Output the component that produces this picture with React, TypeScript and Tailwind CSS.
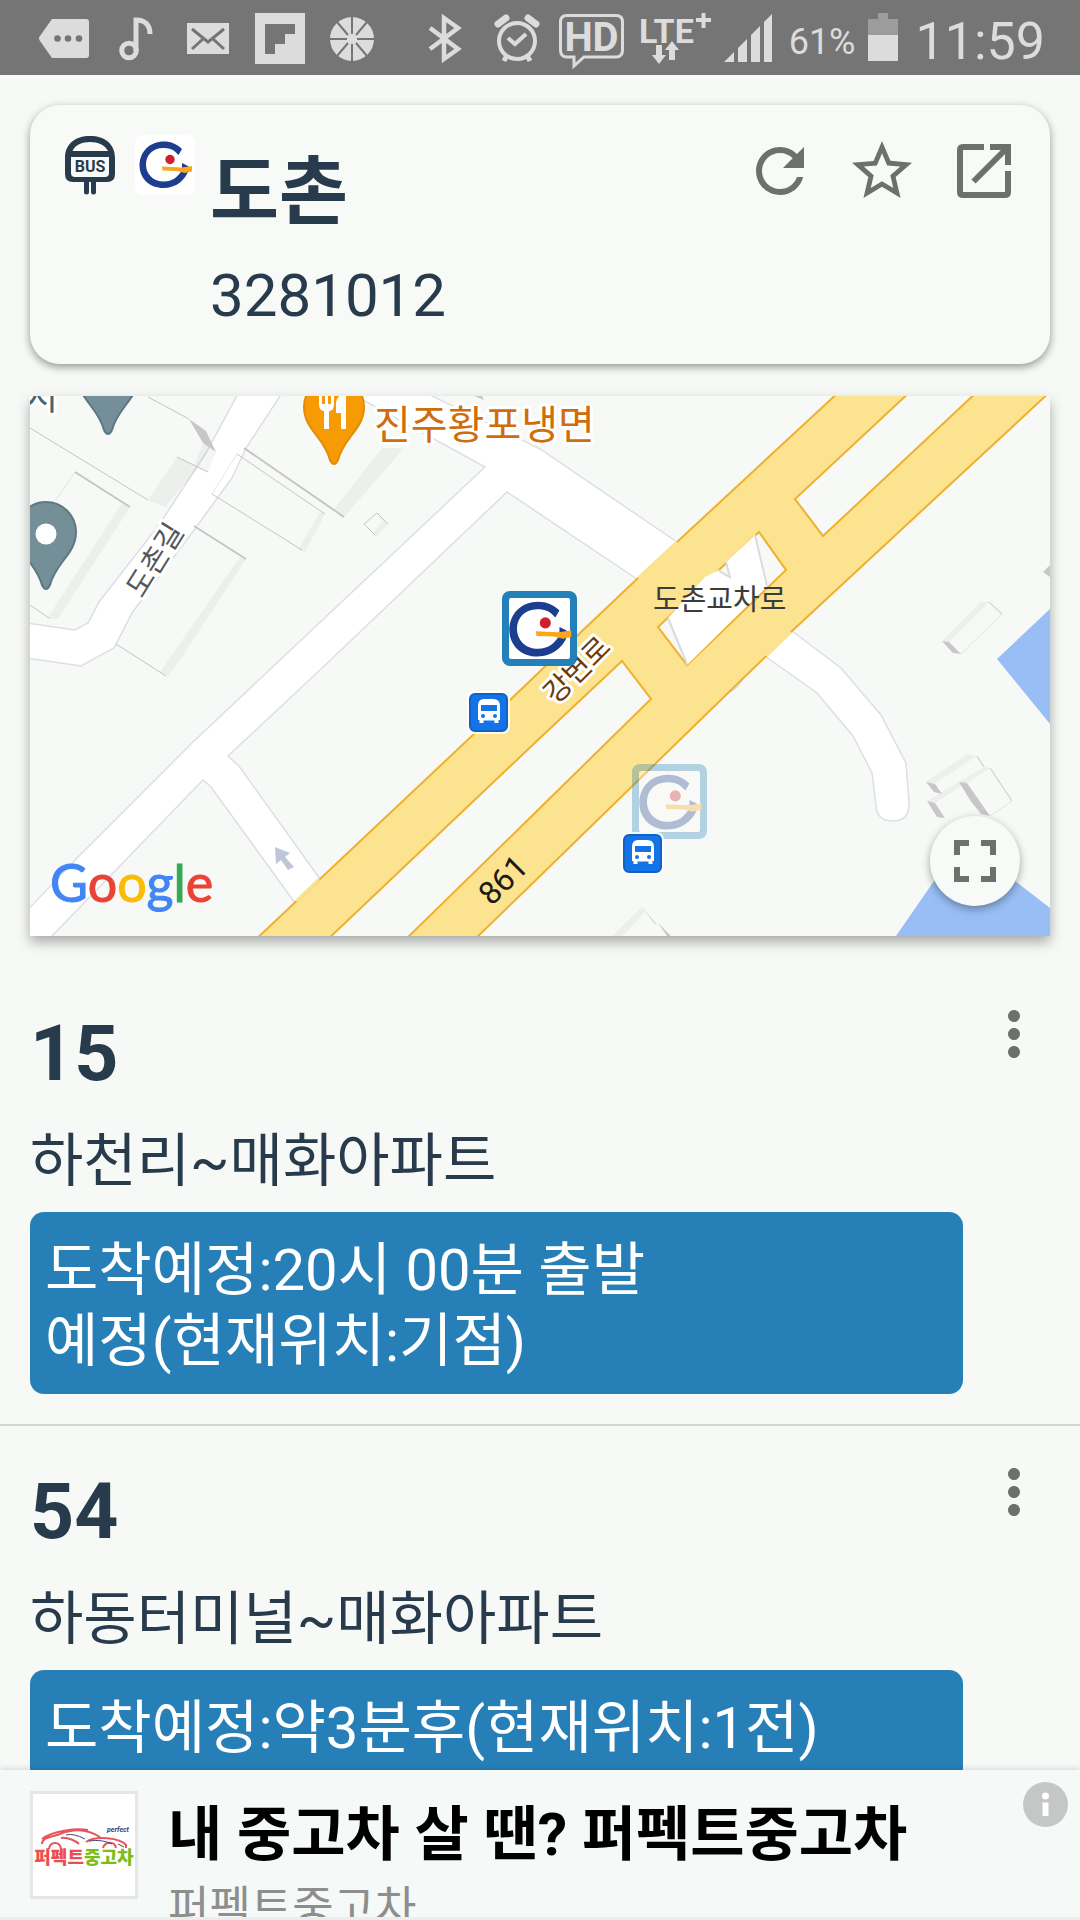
import type { ReactNode } from 'react'
import { MdFullscreen, MdMoreVert, MdRefresh, MdStarBorder } from 'react-icons/md'

type Route = {
  number: string
  name: string
  arrival: string
}

const routes: Route[] = [
  { number: '15', name: '하천리~매화아파트', arrival: '도착예정:20시 00분 출발\n예정(현재위치:기점)' },
  { number: '54', name: '하동터미널~매화아파트', arrival: '도착예정:약3분후(현재위치:1전)' },
]

function StatusIcon({ width, children }: { width: number; children: ReactNode }) {
  return (
    <svg width={width} height={75} viewBox={`0 0 ${width} 75`} className="shrink-0 fill-[#dcdcdc]" aria-hidden="true">
      {children}
    </svg>
  )
}

function StatusBar() {
  return (
    <div className="flex h-[75px] shrink-0 items-center justify-between bg-[#757575] pr-[35px] pl-[39px] text-[#dcdcdc]">
      <div className="flex gap-[22px]">
        <StatusIcon width={50}>
          <path d="M13 19H47Q50 19 50 22V55Q50 58 47 58H13L1 41Q-1 38 1 36Z" />
          <g fill="#757575">
            <circle cx="18.500" cy="38.500" r="3.300" />
            <circle cx="29" cy="38.500" r="3.300" />
            <circle cx="40" cy="38.500" r="3.300" />
          </g>
        </StatusIcon>
        <StatusIcon width={50}>
          <circle cx="18" cy="50.500" r="7.300" fill="none" stroke="#dcdcdc" strokeWidth="5" />
          <path d="M25 51V20C34 20 39 25 39 34" fill="none" stroke="#dcdcdc" strokeWidth="5" />
        </StatusIcon>
        <StatusIcon width={50}>
          <path d="M4 23H46V54H4Z" />
          <path d="M9 29L25 42L41 29M9 49L20 39M41 49L30 39" fill="none" stroke="#757575" strokeWidth="3" />
        </StatusIcon>
        <StatusIcon width={50}>
          <path d="M0 13H50V64H0Z" />
          <path d="M10 24H40V34H30V44H20V54H10Z" fill="#757575" />
        </StatusIcon>
        <StatusIcon width={50}>
          <circle cx="25" cy="39" r="22" />
          <g stroke="#757575" strokeWidth="2">
            <path d="M25 17V34M25 44V61M3 39H20M30 39H47M10 22L21 35M40 22L29 35M10 56L21 43M40 56L29 43" />
          </g>
        </StatusIcon>
      </div>
      <div className="flex items-center gap-3">
        <StatusIcon width={60}>
          <path d="M15 28L43 49L29 59V18L43 28L15 49" fill="none" stroke="#dcdcdc" strokeWidth="4.500" />
        </StatusIcon>
        <StatusIcon width={60}>
          <circle cx="30" cy="41" r="18" fill="none" stroke="#dcdcdc" strokeWidth="4" />
          <path d="M21 38L28 44L39 34" fill="none" stroke="#dcdcdc" strokeWidth="4" />
          <path d="M11 24L19 18M49 24L41 18" fill="none" stroke="#dcdcdc" strokeWidth="7" strokeLinecap="round" />
          <path d="M20 55L17 61M40 55L43 61" fill="none" stroke="#dcdcdc" strokeWidth="5" />
        </StatusIcon>
        <StatusIcon width={66}>
          <path
            d="M8 15.500H57Q63.500 15.500 63.500 22V50Q63.500 57 57 57H25L15 66V57H8Q1.500 57 1.500 50V22Q1.500 15.500 8 15.500Z"
            fill="none"
            stroke="#dcdcdc"
            strokeWidth="3"
          />
          <text x="32.500" y="51" textAnchor="middle" className="text-[40px] font-bold">
            HD
          </text>
        </StatusIcon>
        <StatusIcon width={75}>
          <text x="2" y="43" className="text-[34px] font-bold">
            LTE
          </text>
          <path d="M59 20H74M66.500 13V28" stroke="#dcdcdc" strokeWidth="4" />
          <path d="M19 45H25V55H29L22 64L15 55H19ZM32 60H38V50H42L35 41L28 50H32Z" />
        </StatusIcon>
        <StatusIcon width={48}>
          <path d="M0 62L10 52V62ZM14 48L23 39V62H14ZM27 35L36 26V62H27ZM40 22L48 14V62H40Z" />
        </StatusIcon>
        <span className="w-[72px] pt-2 text-right text-4xl">61%</span>
        <StatusIcon width={36}>
          <path d="M0 19H10V13H20V19H30V61H0Z" fill="#9c9c9c" />
          <path d="M0 35H30V61H0Z" />
        </StatusIcon>
        <time className="pt-2 text-[52px] leading-none">11:59</time>
      </div>
    </div>
  )
}

function BusStopIcon() {
  return (
    <svg viewBox="0 0 60 60" className="size-[60px] shrink-0" fill="#283b4c" aria-hidden="true">
      <path
        fillRule="evenodd"
        d="M30 1C45 1 55 9 55 23V39Q55 47 47 47H13Q5 47 5 39V23C5 9 15 1 30 1ZM12.500 16H48C45 10 38 7 30 7S15 10 12.500 16ZM11 22V38Q11 42 15 42H45Q49 42 49 38V22Z"
      />
      <path d="M26.500 46V57M33.500 46V57" stroke="#283b4c" strokeWidth="5" strokeLinecap="round" />
      <text x="30" y="37" textAnchor="middle" className="text-[16px] font-bold">
        BUS
      </text>
    </svg>
  )
}

function CityMark() {
  return (
    <>
      <path
        d="M43.500 20L47 14C42 9 36 6.500 29 6.500C15 6.500 5 16 4.500 30C4.500 44 15 53 28.500 53C41 53 51 45 54 34L53 31L47 28V35C43 42 37 46.500 29 46.500C18 46.500 11 39 11 29.500C11 20 18 13 28 13C34 13 38 14.500 40.500 17Z"
        fill="#1d3d8f"
      />
      <circle cx="35" cy="24.500" r="4.700" fill="#d11f2d" />
      <path d="M27 31.500L46 32.500L57 31V36.500L50 38L42 36L27.500 35.500Z" fill="#faa61a" />
    </>
  )
}

function OpenIcon() {
  return (
    <svg viewBox="0 0 24 24" className="size-[72px]" fill="none" stroke="currentColor" strokeWidth="2" aria-hidden="true">
      <path d="M12 4H5Q4 4 4 5V19Q4 20 5 20H19Q20 20 20 19V12M14 4H20V10M20 4L8.500 15.500" />
    </svg>
  )
}

function StopCard() {
  return (
    <section className="flex gap-[15px] rounded-[30px] bg-[#f8faf7] px-[30px] pt-[30px] pb-[22px] shadow-[0_3px_9px_rgba(0,0,0,0.4)]">
      <BusStopIcon />
      <svg viewBox="0 0 60 60" className="size-[60px] shrink-0 rounded-lg bg-white" aria-hidden="true">
        <CityMark />
      </svg>
      <div className="min-w-0 flex-1">
        <h1 className="text-[75px] leading-[114px] font-bold">도촌</h1>
        <p className="text-[60px] leading-[93px]">3281012</p>
      </div>
      <div className="flex h-[72px] gap-[30px] text-[#6e706d]">
        <button type="button" aria-label="새로고침">
          <MdRefresh className="size-[72px]" />
        </button>
        <button type="button" aria-label="즐겨찾기">
          <MdStarBorder className="size-[72px]" />
        </button>
        <button type="button" aria-label="열기">
          <OpenIcon />
        </button>
      </div>
    </section>
  )
}

const PIN = 'M0-31C17-31 30-17 30-1C30 21 10 29 4 52Q0 60-4 52C-10 29-30 21-30-1C-30-17-17-31 0-31Z'

function StopMarker({ x, y, faded }: { x: number; y: number; faded?: boolean }) {
  return (
    <g transform={`translate(${x} ${y})`} opacity={faded ? 0.32 : 1}>
      <rect width="75" height="75" rx="8" fill="#2380b8" />
      <rect x="7" y="7" width="61" height="61" rx="2" fill="#fff" />
      <g transform="translate(2 3) scale(1.180)">
        <CityMark />
      </g>
    </g>
  )
}

function BusBadge({ x, y }: { x: number; y: number }) {
  return (
    <g transform={`translate(${x} ${y})`}>
      <rect x="-2" y="-2" width="43" height="43" rx="7" fill="#fff" opacity="0.8" />
      <rect x="1" y="1" width="37" height="37" rx="5" fill="#1473e6" stroke="#0e62c8" strokeWidth="2" />
      <path d="M9 13Q9 6 15 6H24Q31 6 31 13V27H29.500V30H25.500V27.500H14.500V30H10.500V27H9Z" fill="#fff" />
      <path d="M12 12H28V18H12Z" fill="#1473e6" />
      <circle cx="14" cy="23" r="2" fill="#1473e6" />
      <circle cx="26" cy="23" r="2" fill="#1473e6" />
    </g>
  )
}

function StopMap() {
  return (
    <section className="relative shadow-[0_6px_12px_rgba(0,0,0,0.32)]">
      <svg viewBox="30 396 1020 540" className="block w-full bg-[#f7f9f6]" role="img" aria-label="도촌 정류장 지도">
        {/* water */}
        <g fill="#98bef5">
          <path d="M1050 609L997 659L1050 724ZM896 936L934 881L965 848L1015 881L1050 908V936Z" />
        </g>

        {/* local roads */}
        <g fill="#fff" stroke="#dcdfe4" strokeWidth="1.500">
          <path d="M240 390L206 453L159 525L99 602L88 623L75 630L20 622V657L81 666L114 648L132 613L194 530L232 478L246 448L284 390Z" />
          <path d="M345 390L485 467L280 660L193 742L78 857L20 918V970L52 936L203 780L211 787L295 903L320 879L239 766L228 756L320 670L507 492L637 579L677 542L540 449L420 390Z" />
          <path d="M792 631L841 668L881 715L906 763L909 802Q910 821 893 821Q877 821 876 806L872 773L853 736L817 693L765 656Z" />
          <path d="M728 693Q740 688 744 675" />
        </g>

        {/* highway */}
        <path
          fillRule="evenodd"
          fill="#fce38f"
          stroke="#efb02e"
          strokeWidth="2"
          d="M841 390L677 542L637 579L580 633L509 701L320 879L253 942H325L540 738L622 661L651 699L540 808L403 942H472L540 876L728 693L792 631L1052 390H979L823 536L795 499L912 390ZM759 532L786 570L687 665L658 627L719 570Z"
        />
        <path d="M755 535L767 586L687 665L668 618L705 577L719 570L730 577L726 562Z" fill="#fff" />
        <path d="M755 535L767 586M668 618L687 664M726 562L730 577L719 571" fill="none" stroke="#d8dce0" strokeWidth="2" />
        <path d="M677 542L638 578M791 632L766 656M319 879L296 901" stroke="#fce38f" strokeWidth="3" />

        {/* buildings */}
        <g fill="#8a8d8a" fillOpacity="0.090">
          <path d="M177 457L199 467L165 507L148 500ZM203 443L216 452L208 472L194 467Z" />
          <path d="M130 507L58 619H47L122 503ZM344 517L404 448H382L335 508ZM325 514L305 552L298 550L320 512Z" />
          <path d="M246 559L180 660L168 676L160 672L240 557ZM377 513L388 524L376 537L373 533L382 522Z" />
          <path d="M942 641L981 602H989L949 642ZM926 782L967 754L977 756L934 784ZM927 801L984 767L990 768L935 803ZM642 907L612 936H623L645 912Z" />
        </g>
        <g fill="#c6c7c6">
          <path d="M189 419L206 431L216 452L203 443ZM942 641L949 642L961 654L953 653ZM1043 572L1050 565V577Z" />
          <path d="M926 782L935 784L942 794L934 792ZM927 801L935 803L945 818L937 817ZM959 782L967 783L990 816L981 814L970 800Z" />
          <path d="M642 907L657 925L654 923ZM658 923L671 936H667ZM474 396H482L484 400Z" />
        </g>
        <g fill="none" stroke="#c4c5c4" strokeWidth="1">
          <path d="M30 428L148 500M177 457L208 472M148 397L189 419M30 605L49 618M116 644L166 676M237 454L325 514M212 494L302 550" />
          <path d="M364 524L377 513L388 524M364 524L375 535M989 602L1002 614M977 756L984 767M990 768L1012 801" />
          <path d="M75 472L130 507M244 448L344 517M194 526L246 559" strokeWidth="2" />
          <path d="M237 454L212 494M75 472L56 500M1002 614L961 654M1012 801L990 816" opacity="0.400" />
        </g>

        {/* one-way arrow */}
        <path d="M275 847L290 853L285 857L294 867L288 870L281 860L276 864Z" fill="#bfc6d9" />

        {/* place pins */}
        <g fill="#758f98" stroke="#5b7983" strokeWidth="2">
          <path d={PIN} transform="translate(108 378)" />
          <path d={PIN} transform="translate(46 533)" />
        </g>
        <circle cx="46" cy="534" r="10.500" fill="#fff" />
        <path d={PIN} transform="translate(334 408)" fill="#f79b04" stroke="#e58a06" strokeWidth="2" />
        <path d="M319 396V404Q319 411 324 411V429H329V411Q334 411 334 404V396H331V404H328V396H325V404H322V396ZM346 394V429H341V413H336V403Q337 394 346 394Z" fill="#fff" />

        {/* labels */}
        <g stroke="#fff" strokeWidth="6" strokeLinejoin="round" paintOrder="stroke">
          <text x="374" y="439" className="text-[40px]" fill="#cf6d0c">
            진주황포냉면
          </text>
          <text x="25" y="410" className="text-[36px]" fill="#4b646d">
            시
          </text>
          <text transform="translate(155 560) rotate(-58)" y="10" textAnchor="middle" className="text-[29px]" fill="#54575a">
            도촌길
          </text>
          <text transform="translate(577 670) rotate(-45)" y="10" textAnchor="middle" className="text-[29px]" fill="#6b3a0c">
            강변로
          </text>
        </g>
        <text x="653" y="610" className="text-[29px]" fill="#3c3c3c">
          도촌교차로
        </text>
        <text transform="translate(503 880) rotate(-45)" y="11" textAnchor="middle" className="text-[32px]" fill="#1c1a12">
          861
        </text>

        <BusBadge x={469} y={693} />
        <StopMarker x={632} y={764} faded />
        <BusBadge x={623} y={834} />
        <StopMarker x={502} y={591} />

        <text x="50" y="902" className="font-[Lato] text-[52px]" strokeWidth="1">
          <tspan fill="#4285f4" stroke="#4285f4">G</tspan>
          <tspan fill="#ea4335" stroke="#ea4335">o</tspan>
          <tspan fill="#fbbc05" stroke="#fbbc05">o</tspan>
          <tspan fill="#4285f4" stroke="#4285f4">g</tspan>
          <tspan fill="#34a853" stroke="#34a853">l</tspan>
          <tspan fill="#ea4335" stroke="#ea4335">e</tspan>
        </text>
      </svg>
      <button
        type="button"
        aria-label="전체화면"
        className="absolute right-[30px] bottom-[30px] flex size-[90px] items-center justify-center rounded-full bg-[#f8faf7] text-[#6e706d] shadow-[0_3px_9px_rgba(0,0,0,0.35)]"
      >
        <MdFullscreen className="size-[72px]" />
      </button>
    </section>
  )
}

function RouteItem({ route }: { route: Route }) {
  return (
    <li className="flex items-start gap-[15px] border-b-2 border-[#d5d7d4] p-[30px]">
      <div className="min-w-0 flex-1">
        <h2 className="text-[77px] leading-[112px] font-bold">{route.number}</h2>
        <p className="text-[58px] leading-[102px]">{route.name}</p>
        <p className="rounded-[14px] bg-[#2680b7] px-[15px] pt-[23px] pb-[17px] text-[58px] leading-[71px] break-keep whitespace-pre-line text-white">
          {route.arrival}
        </p>
      </div>
      <button type="button" aria-label="더보기" className="text-[#6e706d]">
        <MdMoreVert className="size-[72px]" />
      </button>
    </li>
  )
}

function AdLogo() {
  return (
    <svg viewBox="0 0 108 108" className="size-[108px] shrink-0" aria-hidden="true">
      <rect x="1.500" y="1.500" width="105" height="105" fill="#fff" stroke="#e6e6e6" strokeWidth="3" />
      <g fill="none" stroke="#e8555a" strokeWidth="2">
        <path d="M12 53C12 46 22 46 30 43C42 38 56 37 70 46M12 48C22 40 46 37 58 39M56 51C66 44 90 47 96 54V57" />
        <path d="M19 58C20 50 30 50 31 58M73 57C75 50 85 50 86 57M31 47C38 46 46 50 49 53" />
      </g>
      <path d="M36 44Q44 42 55 48M59 50Q72 48 82 53M88 53L94 56" fill="none" stroke="#46496e" />
      <text x="77" y="41" className="text-[7px] font-bold italic" fill="#34406e">
        perfect
      </text>
      <text x="54" y="73" textAnchor="middle" className="text-[18px] font-black">
        <tspan fill="#ea4e50">퍼펙트</tspan>
        <tspan fill="#7dbd17">중고차</tspan>
      </text>
    </svg>
  )
}

function AdBanner() {
  return (
    <aside className="relative z-10 flex h-[150px] shrink-0 gap-[30px] overflow-hidden border-b-3 border-[#ededed] bg-[#f5f9f8] pt-[21px] pl-[30px] shadow-[0_-1px_6px_rgba(0,0,0,0.15)]">
      <AdLogo />
      <div className="min-w-0 flex-1 whitespace-nowrap">
        <p className="text-[59px] leading-[88px] font-bold text-black">내 중고차 살 땐? 퍼펙트중고차</p>
        <p className="text-[45px] leading-[60px] text-[#8e8e8e]">퍼펙트중고차</p>
      </div>
      <button type="button" aria-label="광고 정보" className="absolute top-3 right-3 size-[45px]">
        <svg viewBox="0 0 45 45" aria-hidden="true">
          <circle cx="22.500" cy="22.500" r="22.500" fill="#c4c7c6" />
          <circle cx="22.500" cy="14" r="3.500" fill="#fff" />
          <path d="M19.500 20.500H25.500V34H19.500Z" fill="#fff" />
        </svg>
      </button>
    </aside>
  )
}

export default function App() {
  return (
    <div className="flex h-screen flex-col overflow-hidden bg-[#f7f9f6] font-[Roboto,'Noto_Sans_CJK_KR',sans-serif] text-[#283b4c]">
      <StatusBar />
      <main className="min-h-0 flex-1 overflow-hidden">
        <div className="flex flex-col gap-8 px-[30px] pt-[30px]">
          <StopCard />
          <StopMap />
        </div>
        <ul className="mt-8">
          {routes.map((route) => (
            <RouteItem key={route.number} route={route} />
          ))}
        </ul>
      </main>
      <AdBanner />
    </div>
  )
}
